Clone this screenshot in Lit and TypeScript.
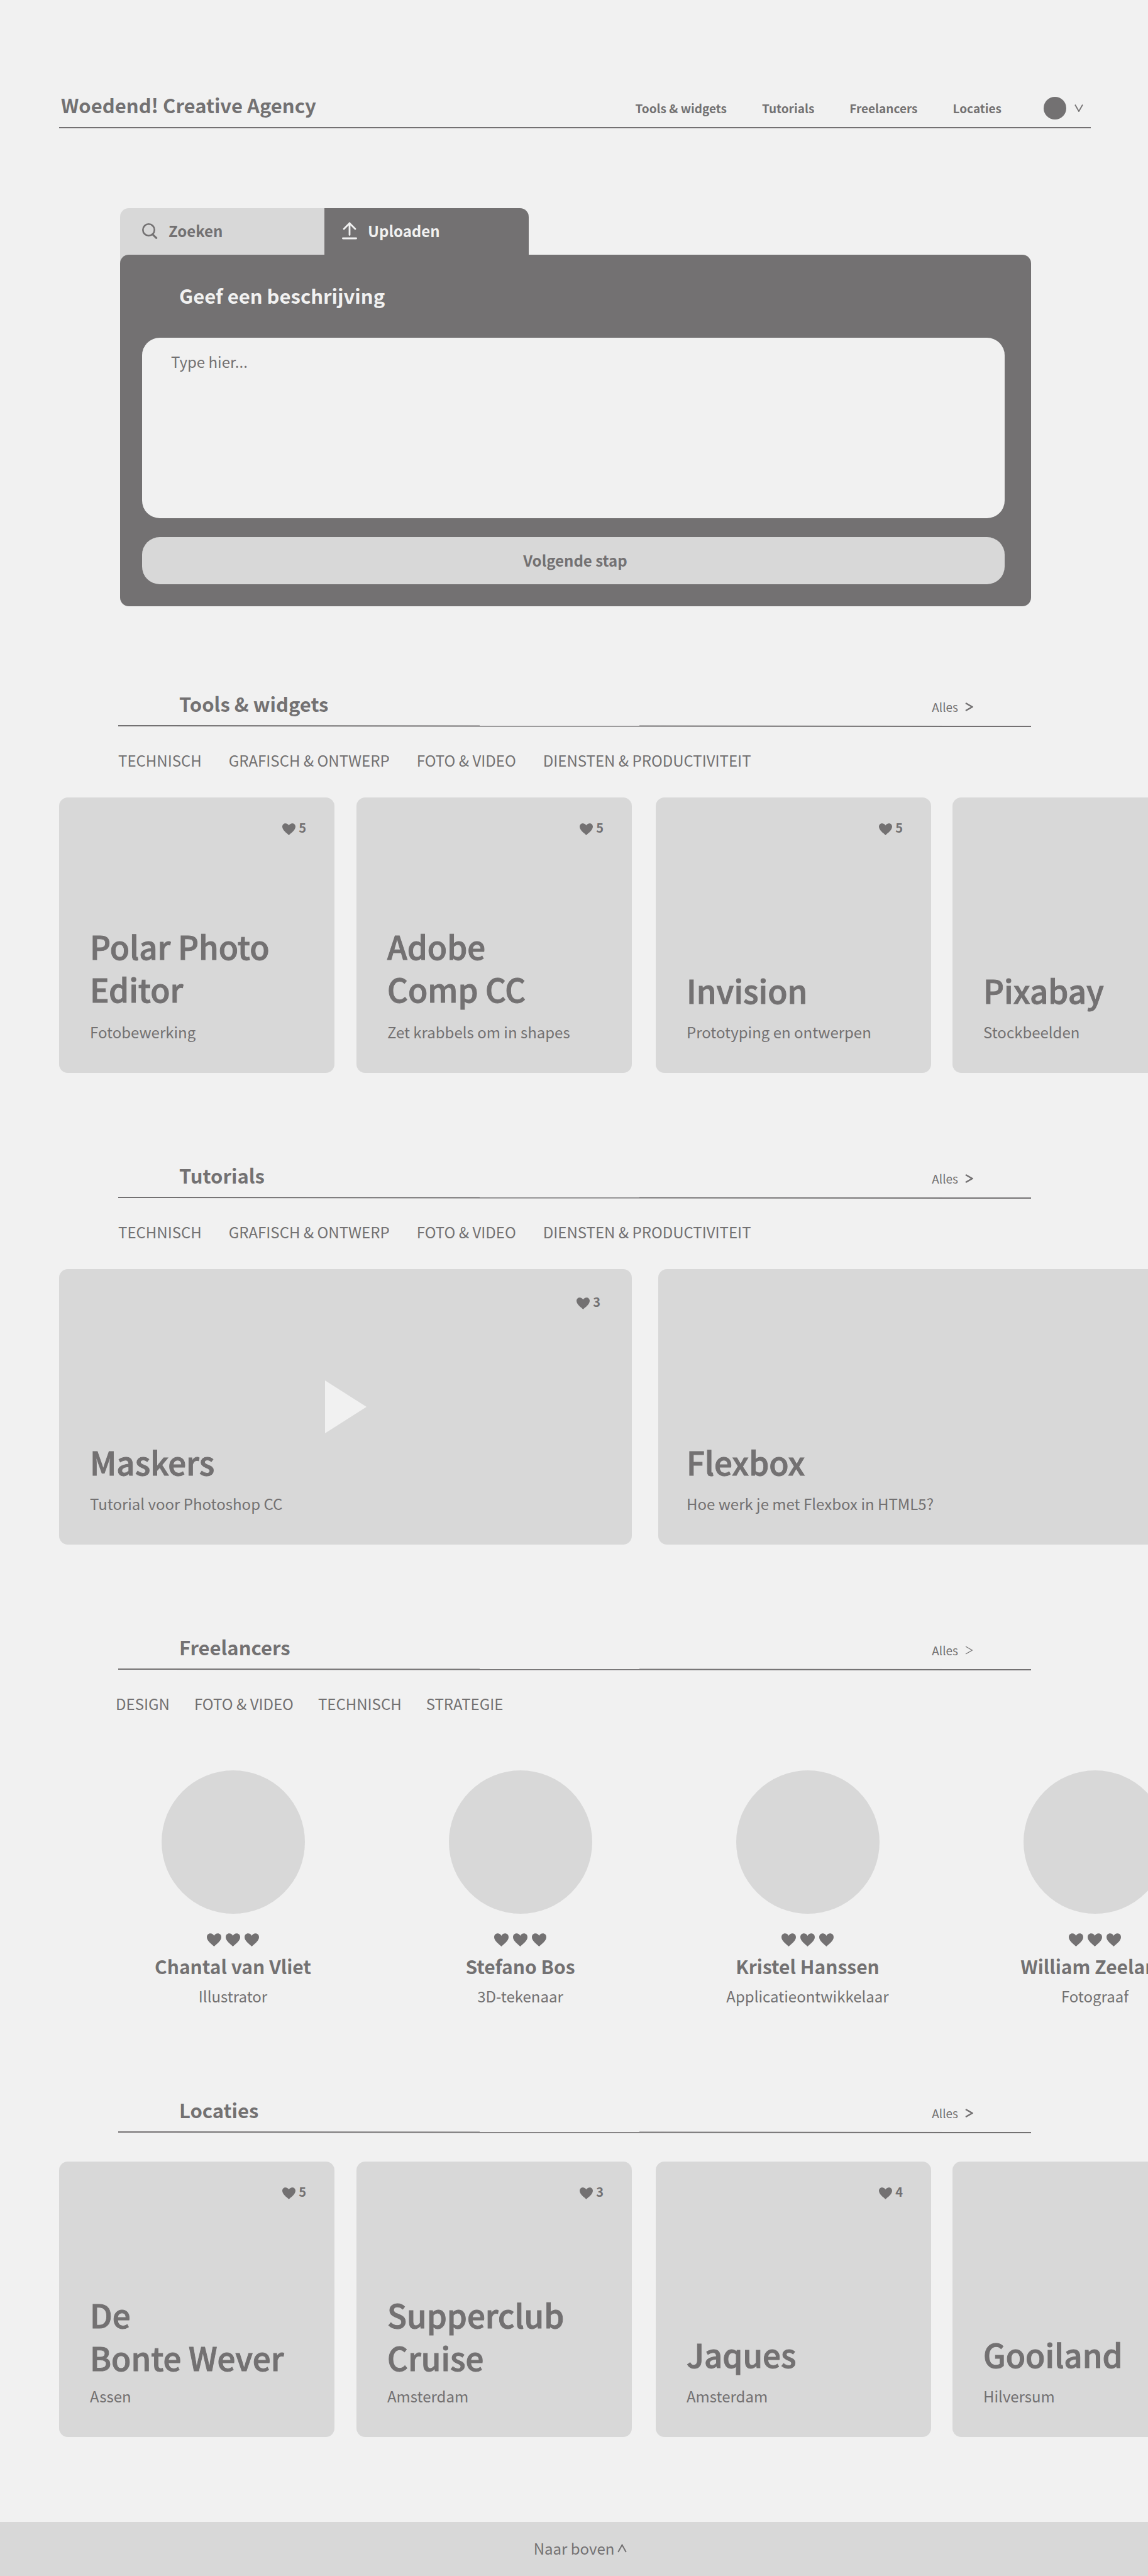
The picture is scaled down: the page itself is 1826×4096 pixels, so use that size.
import { LitElement, html, css, svg, nothing } from "lit";
import { customElement, property } from "lit/decorators.js";
import { classMap } from "lit/directives/class-map.js";

interface CardData {
  title: string[];
  subtitle: string;
  likes?: number;
  video?: boolean;
}

const NAV = ["Tools & widgets", "Tutorials", "Freelancers", "Locaties"];
const TOPICS = ["Technisch", "Grafisch & ontwerp", "Foto & video", "Diensten & productiviteit"];
const SKILLS = ["Design", "Foto & video", "Technisch", "Strategie"];

const TOOLS: CardData[] = [
  { title: ["Polar Photo", "Editor"], subtitle: "Fotobewerking", likes: 5 },
  { title: ["Adobe", "Comp CC"], subtitle: "Zet krabbels om in shapes", likes: 5 },
  { title: ["Invision"], subtitle: "Prototyping en ontwerpen", likes: 5 },
  { title: ["Pixabay"], subtitle: "Stockbeelden" },
];

const TUTORIALS: CardData[] = [
  { title: ["Maskers"], subtitle: "Tutorial voor Photoshop CC", likes: 3, video: true },
  { title: ["Flexbox"], subtitle: "Hoe werk je met Flexbox in HTML5?" },
];

const PLACES: CardData[] = [
  { title: ["De", "Bonte Wever"], subtitle: "Assen", likes: 5 },
  { title: ["Supperclub", "Cruise"], subtitle: "Amsterdam", likes: 3 },
  { title: ["Jaques"], subtitle: "Amsterdam", likes: 4 },
  { title: ["Gooiland"], subtitle: "Hilversum" },
];

const PEOPLE = [
  { name: "Chantal van Vliet", role: "Illustrator" },
  { name: "Stefano Bos", role: "3D-tekenaar" },
  { name: "Kristel Hanssen", role: "Applicatieontwikkelaar" },
  { name: "William Zeeland", role: "Fotograaf" },
];

const heartShape = svg`<path d="M12 21.5 C9 18.5 1 13 1 6.8 C1 3 3.4 .8 6.4 .8 C8.8 .8 11 2.2 12 4.6 C13 2.2 15.2 .8 17.6 .8 C20.6 .8 23 3 23 6.8 C23 13 15 18.5 12 21.5 Z" fill="currentColor"/>`;
const heart = html`<svg class="heart" viewBox="1 0.6 22 21" preserveAspectRatio="none" aria-hidden="true">${heartShape}</svg>`;

const base = css`
  *, *::before, *::after { box-sizing: border-box; }
  h1, h2, h3, p, ul { margin: 0; padding: 0; font-weight: inherit; }
  ul { list-style: none; }
  a { color: inherit; text-decoration: none; }
  svg { display: block; flex: none; }
  button { border: 0; padding: 0; margin: 0; background: none; font: inherit; color: inherit; cursor: pointer; }
`;

@customElement("content-card")
class ContentCard extends LitElement {
  @property({ attribute: false }) card!: CardData;
  @property({ type: Boolean, reflect: true }) compact = false;
  @property({ type: Boolean, reflect: true }) wide = false;

  static styles = [base, css`
    :host { display: block; }
    .card {
      position: relative;
      display: flex;
      flex-direction: column;
      height: 438px;
      padding: 36px 45px 47px 49px;
      border-radius: 14px;
      background: var(--light);
    }
    :host([wide]) .card { padding-left: 45px; }
    :host([wide]) .video { padding: 40px 50px 47px 49px; }
    .likes {
      display: flex;
      align-items: flex-end;
      justify-content: flex-end;
      gap: 5px;
      font-size: 20px;
      font-weight: 700;
      line-height: 24px;
    }
    .heart { width: 21px; height: 19px; }
    .text { display: flex; flex-direction: column; gap: 15px; margin-top: auto; }
    .tall { gap: 17px; }
    :host([compact]) .tall { gap: 10px; }
    .title { font-size: 51px; font-weight: 500; line-height: 68px; white-space: nowrap; -webkit-text-stroke: 1px currentColor; }
    .line { display: block; }
    .subtitle { font-size: 24px; line-height: 36px; white-space: nowrap; }
    .play { position: absolute; inset: 0; margin: auto; width: 66px; height: 84px; color: var(--page); }
  `];

  render() {
    const c = this.card;
    return html`
      <article class=${classMap({ card: true, video: !!c.video })}>
        ${c.likes ? html`<div class="likes">${heart}<span>${c.likes}</span></div>` : nothing}
        ${c.video ? html`<button class="play" aria-label="Afspelen">
          <svg width="66" height="84" viewBox="0 0 66 84"><path d="M0 0 L66 42 L0 84 Z" fill="currentColor"/></svg>
        </button>` : nothing}
        <div class=${classMap({ text: true, tall: c.title.length > 1 })}>
          <h3 class="title">${c.title.map((l) => html`<span class="line">${l}</span>`)}</h3>
          <p class="subtitle">${c.subtitle}</p>
        </div>
      </article>`;
  }
}

@customElement("section-head")
class SectionHead extends LitElement {
  @property() heading = "";
  @property({ attribute: false }) topics: string[] = [];
  @property({ type: Boolean, reflect: true }) thin = false;

  static styles = [base, css`
    :host { display: block; padding: 0 186px 0 188px; }
    .bar { display: flex; align-items: baseline; justify-content: space-between; padding: 0 92px 10px 97px; }
    .heading { font-size: 31px; font-weight: 700; line-height: 48px; }
    .all { display: flex; align-items: center; gap: 11px; font-size: 19px; line-height: 28px; }
    .rule { width: 100%; height: 4px; }
    .topics { display: flex; gap: 43px; padding-top: 34px; font-size: 24px; line-height: 36px; text-transform: uppercase; }
    :host([thin]) .topics { gap: 39px; margin-left: -4px; }
  `];

  render() {
    return html`
      <div class="bar">
        <h2 class="heading">${this.heading}</h2>
        <a class="all" href="#">Alles
          <svg width="13" height="14" viewBox="0 0 13 14" aria-hidden="true">
            <path d="M1 1 L11.4 7 L1 13" fill="none" stroke="currentColor" stroke-width=${this.thin ? 1.2 : 2.4}/>
          </svg>
        </a>
      </div>
      <svg class="rule" viewBox="0 0 1452 4" preserveAspectRatio="none" aria-hidden="true">
        <path d="M0 1 L1452 2" stroke="currentColor" stroke-width="2"/>
      </svg>
      ${this.topics.length ? html`<ul class="topics">
        ${this.topics.map((t) => html`<li><a href="#">${t}</a></li>`)}
      </ul>` : nothing}`;
  }
}

@customElement("app-root")
class AppRoot extends LitElement {
  static styles = [base, css`
    :host {
      --page: #f1f1f1;
      --light: #d8d8d8;
      --dark: #737172;
      display: block;
      overflow: hidden;
      background: var(--page);
      color: var(--dark);
      font-family: "Noto Sans CJK SC", "Noto Sans", sans-serif;
    }
    .top {
      display: flex;
      align-items: baseline;
      justify-content: space-between;
      margin: 0 91px 0 94px;
      padding: 143px 12px 8px 3px;
      border-bottom: 2px solid var(--dark);
    }
    .brand { font-size: 31px; font-weight: 700; line-height: 48px; }
    .nav { display: flex; align-items: center; gap: 67px; font-size: 19px; font-weight: 700; line-height: 44px; }
    .links { display: flex; gap: 56px; }
    .account { display: flex; align-items: center; gap: 13px; }
    .avatar { width: 36px; height: 36px; border-radius: 50%; background: var(--dark); }

    .upload { margin: 127px 186px 0 191px; }
    .tabs { display: flex; }
    .tab {
      display: flex;
      align-items: center;
      gap: 17px;
      width: 325px;
      height: 74px;
      padding-bottom: 2px;
      font-size: 24px;
      font-weight: 700;
      line-height: 36px;
    }
    .search { height: 88px; margin-bottom: -14px; padding: 0 0 16px 35px; border-radius: 14px 0 0 0; background: var(--light); }
    .active { padding-left: 28px; border-radius: 0 14px 0 0; background: var(--dark); color: var(--page); }
    .panel {
      position: relative;
      display: flex;
      flex-direction: column;
      padding: 41px 42px 35px 35px;
      border-radius: 14px;
      background: var(--dark);
    }
    .label { padding-left: 59px; color: var(--page); font-size: 31px; font-weight: 700; line-height: 48px; }
    .box {
      display: block;
      width: 100%;
      height: 287px;
      margin: 43px 0 30px;
      padding: 20px 46px;
      border: 0;
      border-radius: 28px;
      background: var(--page);
      color: var(--dark);
      font: inherit;
      font-size: 24px;
      line-height: 36px;
      resize: none;
    }
    .box::placeholder { color: var(--dark); opacity: 1; }
    .next { height: 75px; padding: 0 0 2px 6px; border-radius: 28px; background: var(--light); font-size: 24px; font-weight: 700; line-height: 36px; }

    .section { margin-top: 139px; }
    .first { margin-top: 131px; }
    .cards { display: grid; grid-template-columns: 473px 476px 472px 438px; margin: 41px 0 0 94px; }
    .card { width: 438px; }
    .wide { grid-template-columns: 953px 911px; }
    .wide .card { width: 911px; }
    .places { margin-top: 44px; }

    .people { display: grid; grid-template-columns: repeat(4, 457px); margin: 88px 0 0 142px; }
    .person { display: flex; flex-direction: column; align-items: center; text-align: center; }
    .photo { width: 228px; height: 228px; border-radius: 50%; background: var(--light); }
    .hearts { display: flex; gap: 7px; margin: 31px 0 9px; }
    .heart { width: 23px; height: 21px; }
    .name { font-size: 30px; font-weight: 700; line-height: 44px; }
    .role { margin-top: 8px; font-size: 24px; line-height: 36px; }

    .foot { display: flex; justify-content: center; margin-top: 135px; padding: 24px 0 26px 20px; background: var(--light); font-size: 24px; line-height: 36px; }
    .up { display: flex; align-items: center; gap: 5px; }
  `];

  private cards(items: CardData[], kind = "") {
    return html`<div class=${classMap({ cards: true, wide: kind === "wide", places: kind === "places" })}>
      ${items.map((c) => html`<content-card class="card" .card=${c} ?compact=${kind === "places"} ?wide=${kind === "wide"}></content-card>`)}
    </div>`;
  }

  render() {
    return html`
      <header class="top">
        <h1 class="brand">Woedend! Creative Agency</h1>
        <nav class="nav">
          <div class="links">${NAV.map((n) => html`<a href="#">${n}</a>`)}</div>
          <button class="account" aria-label="Account">
            <span class="avatar"></span>
            <svg width="14" height="12" viewBox="0 0 14 12" aria-hidden="true">
              <path d="M1 .5 L7 11 L13 .5" fill="none" stroke="currentColor" stroke-width="1.8"/>
            </svg>
          </button>
        </nav>
      </header>

      <main>
        <section class="upload">
          <div class="tabs">
            <button class="tab search">
              <svg width="25" height="25" viewBox="0 0 25 25" aria-hidden="true" fill="none" stroke="currentColor" stroke-width="2.6">
                <circle cx="10.5" cy="10.5" r="9.2"/>
                <path d="M16.4 17.4 L23.6 24.4" stroke-width="3"/>
              </svg>
              Zoeken
            </button>
            <button class="tab active">
              <svg width="24" height="28" viewBox="0 0 24 28" aria-hidden="true" fill="none" stroke="currentColor" stroke-width="2.8" stroke-linecap="round">
                <path d="M12 2 V20.4 M3 11 L12 2 L21 11"/>
                <path d="M1.4 26 H22.6" stroke-width="2.8"/>
              </svg>
              Uploaden
            </button>
          </div>
          <form class="panel" @submit=${(e: Event) => e.preventDefault()}>
            <label class="label" for="description">Geef een beschrijving</label>
            <textarea class="box" id="description" placeholder="Type hier..."></textarea>
            <button class="next">Volgende stap</button>
          </form>
        </section>

        <section class="section first">
          <section-head heading="Tools &amp; widgets" .topics=${TOPICS}></section-head>
          ${this.cards(TOOLS)}
        </section>

        <section class="section">
          <section-head heading="Tutorials" .topics=${TOPICS}></section-head>
          ${this.cards(TUTORIALS, "wide")}
        </section>

        <section class="section">
          <section-head heading="Freelancers" .topics=${SKILLS} thin></section-head>
          <div class="people">
            ${PEOPLE.map((p) => html`<article class="person">
              <div class="photo"></div>
              <div class="hearts">${heart}${heart}${heart}</div>
              <h3 class="name">${p.name}</h3>
              <p class="role">${p.role}</p>
            </article>`)}
          </div>
        </section>

        <section class="section">
          <section-head heading="Locaties"></section-head>
          ${this.cards(PLACES, "places")}
        </section>
      </main>

      <footer class="foot">
        <a class="up" href="#">Naar boven
          <svg width="15" height="14" viewBox="0 0 15 14" aria-hidden="true">
            <path d="M1.2 13 L7.5 1.6 L13.8 13" fill="none" stroke="currentColor" stroke-width="2"/>
          </svg>
        </a>
      </footer>`;
  }
}
